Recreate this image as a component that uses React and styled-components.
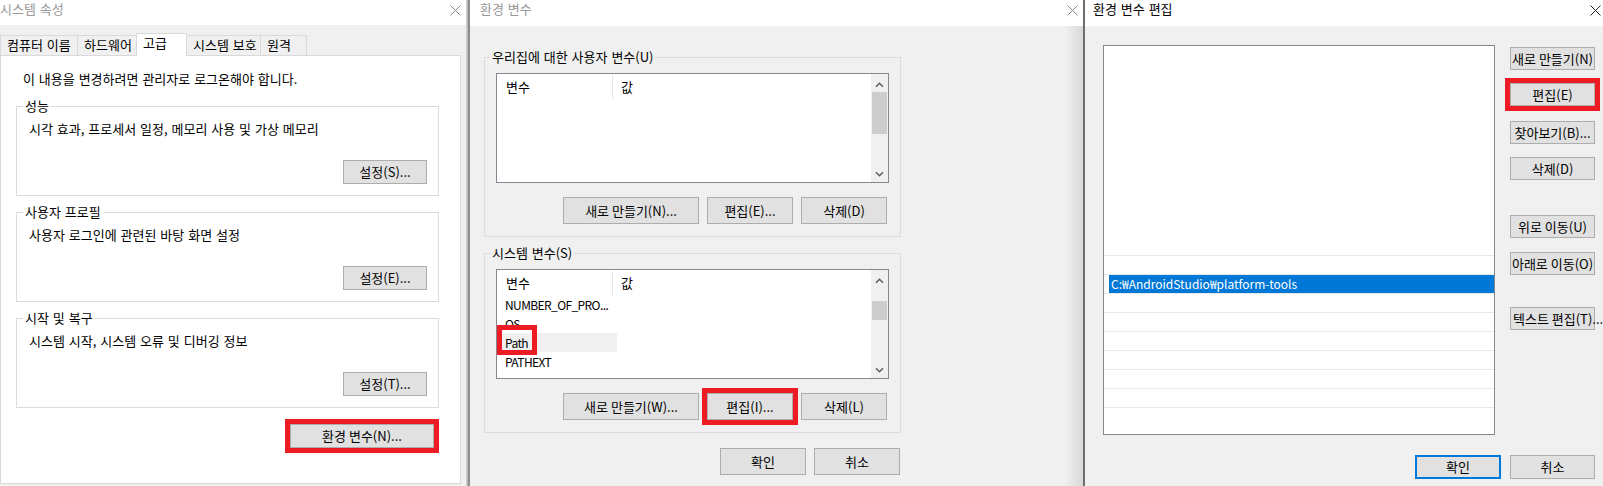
import React from 'react'
import styled, { createGlobalStyle } from 'styled-components'

const GlobalStyle = createGlobalStyle`
  html, body {
    margin: 0;
    padding: 0;
    background: #f0f0f0;
  }
  body {
    font-family: "Noto Sans CJK KR", "Malgun Gothic", sans-serif;
    font-size: 13px;
    word-spacing: 1px;
    color: #000;
  }
  * {
    box-sizing: border-box;
  }
`

const Screen = styled.div`
  display: flex;
  width: 1603px;
  height: 486px;
  overflow: hidden;
  background: #f0f0f0;
`

const Window = styled.section`
  display: flex;
  flex-direction: column;
  flex-shrink: 0;
  width: ${p => p.$width}px;
  height: 100%;
`

const TitleBar = styled.header`
  display: flex;
  justify-content: space-between;
  align-items: flex-start;
  flex-shrink: 0;
  height: ${p => p.$h}px;
  padding: 1px ${p => p.$right}px 0 ${p => p.$left}px;
  background: #fff;
  color: ${p => (p.$active ? '#000' : '#999')};
  line-height: 16px;

  svg {
    margin-top: 4px;
  }
`

const Divider = styled.div`
  flex-shrink: 0;
  width: ${p => p.$w}px;
  height: 100%;
  background: ${p => p.$bg};
`

/* ---------- 시스템 속성 ---------- */

const SheetBody = styled.div`
  flex: 1;
  padding-top: 8px;
`

const TabStrip = styled.div`
  display: flex;
  align-items: flex-end;
  height: 22px;
  position: relative;
  z-index: 1;
`

const Tab = styled.div`
  width: ${p => p.$w}px;
  height: ${p => (p.$active ? 23 : 20)}px;
  margin-bottom: ${p => (p.$active ? -1 : 0)}px;
  & + & {
    margin-left: -1px;
  }
  padding: 1px 0 0 6px;
  border: 1px solid #d9d9d9;
  border-bottom: none;
  background: ${p => (p.$active ? '#fff' : '#f0f0f0')};
  line-height: 16px;
  white-space: nowrap;
`

const TabContent = styled.div`
  display: flex;
  flex-direction: column;
  width: 461px;
  height: 429px;
  padding: 15px 21px 0 15px;
  border: 1px solid #d9d9d9;
  background: #fff;
`

const Notice = styled.div`
  margin: 0 0 19px 7px;
  line-height: 16px;
`

const Group = styled.div`
  display: flex;
  flex-direction: column;
  padding: 0 ${p => p.$padR}px ${p => p.$padB}px ${p => p.$padL}px;
  border: 1px solid #dcdcdc;
  & + & {
    margin-top: ${p => p.$gap}px;
  }
`

const Legend = styled.div`
  align-self: flex-start;
  margin: -9px 0 0 -6px;
  padding: 0 2px;
  background: ${p => p.$bg};
  line-height: 16px;
  white-space: nowrap;
`

const GroupText = styled.div`
  margin-top: 7px;
  line-height: 16px;
`

const Button = styled.button`
  display: flex;
  align-items: center;
  justify-content: ${p => (p.$left ? 'flex-start' : 'center')};
  flex-shrink: 0;
  width: ${p => p.$w}px;
  height: ${p => p.$h}px;
  margin: 0;
  padding: 0 0 0 ${p => (p.$left ? 2 : 0)}px;
  border: 1px solid ${p => (p.$default ? '#0078d7' : '#adadad')};
  box-shadow: ${p => (p.$default ? 'inset 0 0 0 1px #0078d7' : 'none')};
  background: #e1e1e1;
  font: inherit;
  font-size: 13px;
  line-height: 16px;
  color: #000;
  white-space: nowrap;
`

const GroupButton = styled(Button)`
  align-self: flex-end;
  margin-top: 23px;
`

const Highlight = styled.div`
  display: flex;
  flex-shrink: 0;
  margin: -5px;
  border: 5px solid #ed1c24;
  position: relative;
  z-index: 1;
`

const EnvRow = styled.div`
  align-self: flex-end;
  display: flex;
  margin: 16px 5px 0 0;
`

/* ---------- 환경 변수 ---------- */

const EnvBody = styled.div`
  flex: 1;
  padding: 31px 0 0 14px;
  background: linear-gradient(to right, #f0f0f0 calc(100% - 18px), #d8d8d8);
`

const EnvColumn = styled.div`
  display: flex;
  flex-direction: column;
  width: 417px;
`

const ListBox = styled.div`
  display: flex;
  margin-top: 8px;
  height: ${p => p.$h}px;
  border: 1px solid #828790;
  background: #fff;
`

const ListBody = styled.div`
  flex: 1;
  display: flex;
  flex-direction: column;
`

const HeaderRow = styled.div`
  display: flex;
  height: 25px;
  flex-shrink: 0;
`

const HeaderCell = styled.div`
  width: ${p => (p.$w ? `${p.$w}px` : 'auto')};
  flex: ${p => (p.$w ? 'none' : 1)};
  margin-top: 1px;
  padding: 4px 0 0 ${p => p.$pad}px;
  border-right: ${p => (p.$w ? '1px solid #e5e5e5' : 'none')};
  line-height: 16px;
`

const VarRow = styled.div`
  display: flex;
  height: 19px;
  flex-shrink: 0;
`

const VarCell = styled.div`
  position: relative;
  width: 120px;
  padding-left: 8px;
  background: ${p => (p.$hover ? '#f0f0f0' : 'transparent')};
  font-size: 12px;
  letter-spacing: -0.6px;
  line-height: 19px;
  white-space: nowrap;
`

const CellMark = styled.div`
  position: absolute;
  left: 0;
  top: -8px;
  width: 40px;
  height: 30px;
  border: 5px solid #ed1c24;
`

const ScrollBar = styled.div`
  display: flex;
  flex-direction: column;
  flex-shrink: 0;
  width: 17px;
  background: #f0f0f0;
`

const ScrollArrow = styled.div`
  display: flex;
  justify-content: center;
  align-items: ${p => (p.$down ? 'center' : 'flex-start')};
  height: 17px;
  padding-top: ${p => (p.$down ? 0 : 8)}px;
  flex-shrink: 0;
`

const ScrollTrack = styled.div`
  flex: 1;
`

const Thumb = styled.div`
  margin: ${p => p.$top}px 1px 0;
  height: ${p => p.$h}px;
  background: #cdcdcd;
`

const ButtonRow = styled.div`
  display: flex;
  justify-content: flex-end;
  gap: ${p => p.$gap}px;
  margin-top: ${p => p.$mt}px;
  padding-right: ${p => p.$pr}px;
`

/* ---------- 환경 변수 편집 ---------- */

const EditBody = styled.div`
  flex: 1;
  display: grid;
  grid-template-columns: 392px 85px;
  column-gap: 15px;
  align-content: start;
  align-items: start;
  padding: 19px 0 0 18px;
`

const PathList = styled.div`
  display: flex;
  flex-direction: column;
  height: 390px;
  border: 1px solid #828790;
  background: #fff;
`

const PathRow = styled.div`
  display: flex;
  height: 19px;
  flex-shrink: 0;
  border-top: 1px solid ${p => (p.$line ? '#e8e8e8' : 'transparent')};
`

const PathCell = styled.div`
  flex: 1;
  margin-left: 5px;
  padding-left: 2px;
  background: ${p => (p.$selected ? '#0078d7' : 'transparent')};
  color: ${p => (p.$selected ? '#fff' : '#000')};
  font-size: 12px;
  line-height: 18px;
  white-space: nowrap;
`

const SideButtons = styled.div`
  display: flex;
  flex-direction: column;
`

const SideSlot = styled.div`
  display: flex;
  margin-top: ${p => p.$mt}px;
`

const EditFooter = styled.div`
  grid-column: 1 / -1;
  justify-self: end;
  display: flex;
  gap: 9px;
  margin-top: 20px;
`

function CloseIcon({ color }) {
  return (
    <svg width="11" height="11" viewBox="0 0 11 11">
      <path d="M0.5 0.5 L10.5 10.5 M10.5 0.5 L0.5 10.5" stroke={color} strokeWidth="1" fill="none" />
    </svg>
  )
}

function Chevron({ down }) {
  return (
    <svg width="9" height="6" viewBox="0 0 9 6">
      <path
        d={down ? 'M1 1.2 L4.5 4.7 L8 1.2' : 'M1 4.8 L4.5 1.3 L8 4.8'}
        fill="none"
        stroke="#606060"
        strokeWidth="1.6"
      />
    </svg>
  )
}

function Scroll({ top, h }) {
  return (
    <ScrollBar>
      <ScrollArrow>
        <Chevron />
      </ScrollArrow>
      <ScrollTrack>
        <Thumb $top={top} $h={h} />
      </ScrollTrack>
      <ScrollArrow $down>
        <Chevron down />
      </ScrollArrow>
    </ScrollBar>
  )
}

const tabs = [
  { label: '컴퓨터 이름', w: 78 },
  { label: '하드웨어', w: 60 },
  { label: '고급', w: 51, active: true },
  { label: '시스템 보호', w: 75 },
  { label: '원격', w: 47 },
]

const groups = [
  { title: '성능', text: '시각 효과, 프로세서 일정, 메모리 사용 및 가상 메모리', button: '설정(S)...' },
  { title: '사용자 프로필', text: '사용자 로그인에 관련된 바탕 화면 설정', button: '설정(E)...' },
  { title: '시작 및 복구', text: '시스템 시작, 시스템 오류 및 디버깅 정보', button: '설정(T)...' },
]

const systemVars = ['NUMBER_OF_PRO...', 'OS', 'Path', 'PATHEXT']

const sideButtons = [
  { label: '새로 만들기(N)', mt: 2 },
  { label: '편집(E)', mt: 13, mark: true },
  { label: '찾아보기(B)...', mt: 15 },
  { label: '삭제(D)', mt: 13 },
  { label: '위로 이동(U)', mt: 35 },
  { label: '아래로 이동(O)', mt: 14 },
  { label: '텍스트 편집(T)...', mt: 32, left: true },
]

function SystemProperties() {
  return (
    <Window $width={466}>
      <TitleBar $h={25} $left={0} $right={5}>
        <span>시스템 속성</span>
        <CloseIcon color="#888" />
      </TitleBar>
      <SheetBody>
        <TabStrip>
          {tabs.map(t => (
            <Tab key={t.label} $w={t.w} $active={t.active}>
              {t.label}
            </Tab>
          ))}
        </TabStrip>
        <TabContent>
          <Notice>이 내용을 변경하려면 관리자로 로그온해야 합니다.</Notice>
          {groups.map(g => (
            <Group key={g.title} $padL={12} $padR={11} $padB={11} $gap={17}>
              <Legend $bg="#fff">{g.title}</Legend>
              <GroupText>{g.text}</GroupText>
              <GroupButton $w={84} $h={24}>
                {g.button}
              </GroupButton>
            </Group>
          ))}
          <EnvRow>
            <Highlight>
              <Button $w={144} $h={24}>
                환경 변수(N)...
              </Button>
            </Highlight>
          </EnvRow>
        </TabContent>
      </SheetBody>
    </Window>
  )
}

function EnvironmentVariables() {
  return (
    <Window $width={613}>
      <TitleBar $h={26} $left={10} $right={5}>
        <span>환경 변수</span>
        <CloseIcon color="#888" />
      </TitleBar>
      <EnvBody>
        <EnvColumn>
          <Group $padL={11} $padR={11} $padB={12} $gap={16}>
            <Legend $bg="#f0f0f0">우리집에 대한 사용자 변수(U)</Legend>
            <ListBox $h={110}>
              <ListBody>
                <HeaderRow>
                  <HeaderCell $w={116} $pad={9}>
                    변수
                  </HeaderCell>
                  <HeaderCell $pad={8}>값</HeaderCell>
                </HeaderRow>
              </ListBody>
              <Scroll top={1} h={42} />
            </ListBox>
            <ButtonRow $gap={8} $mt={14} $pr={2}>
              <Button $w={136} $h={27}>새로 만들기(N)...</Button>
              <Button $w={86} $h={27}>편집(E)...</Button>
              <Button $w={86} $h={27}>삭제(D)</Button>
            </ButtonRow>
          </Group>
          <Group $padL={11} $padR={11} $padB={12} $gap={16}>
            <Legend $bg="#f0f0f0">시스템 변수(S)</Legend>
            <ListBox $h={110}>
              <ListBody>
                <HeaderRow>
                  <HeaderCell $w={116} $pad={9}>
                    변수
                  </HeaderCell>
                  <HeaderCell $pad={8}>값</HeaderCell>
                </HeaderRow>
                {systemVars.map(name => (
                  <VarRow key={name}>
                    <VarCell $hover={name === 'Path'}>
                      {name}
                      {name === 'Path' && <CellMark />}
                    </VarCell>
                  </VarRow>
                ))}
              </ListBody>
              <Scroll top={14} h={19} />
            </ListBox>
            <ButtonRow $gap={8} $mt={14} $pr={2}>
              <Button $w={136} $h={27}>새로 만들기(W)...</Button>
              <Highlight>
                <Button $w={86} $h={27}>편집(I)...</Button>
              </Highlight>
              <Button $w={86} $h={27}>삭제(L)</Button>
            </ButtonRow>
          </Group>
          <ButtonRow $gap={8} $mt={15} $pr={1}>
            <Button $w={86} $h={27}>확인</Button>
            <Button $w={86} $h={27}>취소</Button>
          </ButtonRow>
        </EnvColumn>
      </EnvBody>
    </Window>
  )
}

function EditEnvironmentVariable() {
  const rows = Array.from({ length: 20 }, (_, i) => i)
  return (
    <Window $width={518}>
      <TitleBar $h={26} $left={8} $right={2} $active>
        <span>환경 변수 편집</span>
        <CloseIcon color="#222" />
      </TitleBar>
      <EditBody>
        <PathList>
          {rows.map(i => (
            <PathRow key={i} $line={i >= 11}>
              <PathCell $selected={i === 12}>
                {i === 12 ? 'C:₩AndroidStudio₩platform-tools' : ''}
              </PathCell>
            </PathRow>
          ))}
        </PathList>
        <SideButtons>
          {sideButtons.map(b => (
            <SideSlot key={b.label} $mt={b.mt}>
              {b.mark ? (
                <Highlight>
                  <Button $w={85} $h={23}>{b.label}</Button>
                </Highlight>
              ) : (
                <Button $w={85} $h={23} $left={b.left}>
                  {b.label}
                </Button>
              )}
            </SideSlot>
          ))}
        </SideButtons>
        <EditFooter>
          <Button $w={86} $h={24} $default>확인</Button>
          <Button $w={85} $h={24}>취소</Button>
        </EditFooter>
      </EditBody>
    </Window>
  )
}

export default function App() {
  return (
    <>
      <GlobalStyle />
      <Screen>
        <SystemProperties />
        <Divider $w={4} $bg="linear-gradient(to right, #d6d6d6, #b2b2b2 50%, #8c8c8c 50%)" />
        <EnvironmentVariables />
        <Divider $w={2} $bg="#6e6e6e" />
        <EditEnvironmentVariable />
      </Screen>
    </>
  )
}
